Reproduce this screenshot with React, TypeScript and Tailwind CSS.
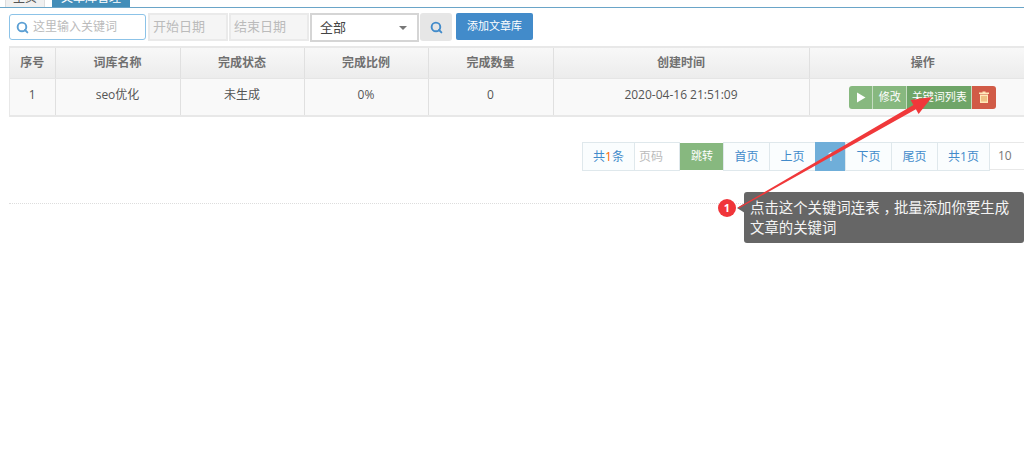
import React from 'react';
import { Search } from 'lucide-react';

const FONT = { fontFamily: '"Open Sans", "Noto Sans CJK SC", sans-serif' };

const columns = [
  { title: '序号', w: 'w-[45.5px]', value: '1' },
  { title: '词库名称', w: 'w-[125px]', value: 'seo优化' },
  { title: '完成状态', w: 'w-[124px]', value: '未生成' },
  { title: '完成比例', w: 'w-[124px]', value: '0%' },
  { title: '完成数量', w: 'w-[125px]', value: '0' },
  { title: '创建时间', w: 'w-[256px]', value: '2020-04-16 21:51:09' },
];

const PageCell: React.FC<{ w: string; children: React.ReactNode }> = ({ w, children }) => (
  <div className={`${w} h-[29px] shrink-0 flex items-center justify-center border border-[#dfe8ec] bg-[#fafdfe] text-[#428bca] text-xs`}>
    {children}
  </div>
);

const App: React.FC = () => {
  return (
    <div className="relative w-[1024px] h-[456px] overflow-hidden bg-white text-[#555] text-xs" style={FONT}>
      {/* Tabs */}
      <div className="h-2 flex items-end gap-[7px] pl-[5px] border-b border-[#6aa5c8] overflow-hidden">
        <div className="w-[40px] h-[7px] bg-[#f0f0f0] border-x border-[#ddd] flex items-center justify-center text-[#555] shrink-0 overflow-hidden">
          <span className="-mt-[12px]">主页</span>
        </div>
        <div className="w-[78px] h-[7px] bg-[#438eb9] flex items-center justify-center text-white shrink-0 overflow-hidden">
          <span className="-mt-[12px]">文章库管理</span>
        </div>
      </div>

      {/* Toolbar */}
      <div className="flex items-start pl-[9px] pt-[5px] h-[38px]">
        <div className="w-[137px] h-[26px] mt-[1px] flex items-center gap-[4px] pl-[6px] rounded-[3px] border border-[#8cc3e8]">
          <Search size={13} strokeWidth={3.5} className="text-[#5b9fd4]" />
          <span className="text-[#bbb]">这里输入关键词</span>
        </div>
        <div className="w-[80px] h-[28px] ml-[2px] flex items-center pl-[3px] bg-[#f5f5f5] border-2 border-[#eaeaea] text-[#bbb] text-[13px]">开始日期</div>
        <div className="w-[80px] h-[28px] ml-[1px] flex items-center pl-[3px] bg-[#f5f5f5] border-2 border-[#eaeaea] text-[#bbb] text-[13px]">结束日期</div>
        <div className="w-[109px] h-[29px] ml-[1px] flex items-center justify-between pl-2 pr-[10px] border-2 border-[#d5d5d5] text-[#444] text-[13px]">
          <span>全部</span>
          <span className="border-x-[4px] border-t-[4px] border-x-transparent border-t-[#777]" />
        </div>
        <div className="w-[32px] h-[28px] ml-px flex items-center justify-center rounded-[3px] bg-[#e6e6e6]">
          <Search size={13} strokeWidth={3.5} className="text-[#428bca]" />
        </div>
        <div className="w-[77px] h-[27px] ml-[4px] flex items-center justify-center rounded-[2px] bg-[#428bca] text-white text-[11px]">添加文章库</div>
      </div>

      {/* Table, runs past the right edge of the window */}
      <div className="ml-[9px] w-[1028px] border-y-2 border-l border-[#e8e8e8]">
        <div className="flex h-[31px] bg-gradient-to-b from-[#f8f8f8] to-[#ececec] border-b border-[#e5e5e5] font-bold text-[#707070]">
          {columns.map(col => (
            <div key={col.title} className={`${col.w} shrink-0 flex items-center justify-center border-r border-[#e0e0e0]`}>{col.title}</div>
          ))}
          <div className="flex-1 flex items-center justify-center pr-px">操作</div>
        </div>
        <div className="flex h-[36px] bg-[#f9f9f9]">
          {columns.map(col => (
            <div key={col.title} className={`${col.w} shrink-0 flex items-center justify-center border-r border-[#e0e0e0] pb-[4px]`}>{col.value}</div>
          ))}
          <div className="flex-1 flex items-center justify-center pr-px">
            <div className="flex h-[23px] text-white text-[11px] rounded-[3px] overflow-hidden">
              <div className="w-6 flex items-center justify-center bg-[#87b87f] border-r border-[#c5dcc1]">
                <svg width="10" height="11" viewBox="0 0 10 11"><path d="M1 0.5 L9.5 5.5 L1 10.5 Z" fill="#fff" /></svg>
              </div>
              <div className="w-[34px] flex items-center justify-center bg-[#87b87f] border-r border-[#c5dcc1]">修改</div>
              <div className="w-[65px] flex items-center justify-center bg-[#6fa568] border-r border-[#c5dcc1]">关键词列表</div>
              <div className="w-[24px] flex items-center justify-center bg-[#d15b47]">
                <svg width="10" height="12" viewBox="0 0 10 12">
                  <path d="M3.5 0.5 H6.5 V1.5 H10 V3 H0 V1.5 H3.5 Z" fill="#ffe9b8" />
                  <path d="M1 3.5 H9 V12 H1 Z" fill="#ffe9b8" />
                  <path d="M3 5 V10.5 M5 5 V10.5 M7 5 V10.5" stroke="#e09a50" strokeWidth="1" />
                </svg>
              </div>
            </div>
          </div>
        </div>
      </div>

      {/* Pagination */}
      <div className="flex pl-[582px] mt-[25px]">
        <PageCell w="w-[53px]"><span>共<span className="text-[#f60]">1</span>条</span></PageCell>
        <div className="w-[46px] h-[29px] -ml-px shrink-0 flex items-center pl-1 bg-white border border-[#dfe8ec] text-[#bbb]">页码</div>
        <div className="w-[44px] h-[27px] mt-px shrink-0 flex items-center justify-center bg-[#87b87f] text-white text-[11px]">跳转</div>
        <PageCell w="w-[47px] -ml-px">首页</PageCell>
        <PageCell w="w-[47px] -ml-px">上页</PageCell>
        <div className="w-[31px] h-[29px] -ml-px shrink-0 flex items-center justify-center bg-[#6faed9] text-white">1</div>
        <PageCell w="w-[47px] -ml-px">下页</PageCell>
        <PageCell w="w-[47px] -ml-px">尾页</PageCell>
        <PageCell w="w-[53px] -ml-px">共1页</PageCell>
        <div className="w-[40px] h-[28px] shrink-0 flex items-center pl-2 bg-white border-y border-[#e8e8e8] text-[#777]">10</div>
      </div>

      {/* Dotted rule */}
      <div className="mt-[32px] mx-[9px] border-t border-dotted border-[#ddd]" />

      {/* Annotation */}
      <div className="absolute left-[744px] top-[192px] w-[280px] h-[51px] rounded-[3px] bg-[#666] text-[#f4f4f4] text-[14.4px] leading-[20px] pl-[6px] pt-[6px]">
        点击这个关键词连表<span className="relative left-[4px]">，</span>批量添加你要生成<br />文章的关键词
      </div>
      <div className="absolute left-[718px] top-[199px] w-[18px] h-[18px] rounded-full bg-[#f0353a] text-white text-[11px] font-bold flex items-center justify-center">1</div>
      <svg className="absolute left-0 top-0 pointer-events-none" width="1024" height="456">
        <path d="M737 208 L745 203 L745 213 Z" fill="#666" />
        <path d="M738 207.6 L913.4 105 L910.6 100 L932 97 L918.6 114 L915.9 109.2 L738.6 208.6 Z" fill="#f0383a" />
      </svg>
    </div>
  );
};

export default App;
